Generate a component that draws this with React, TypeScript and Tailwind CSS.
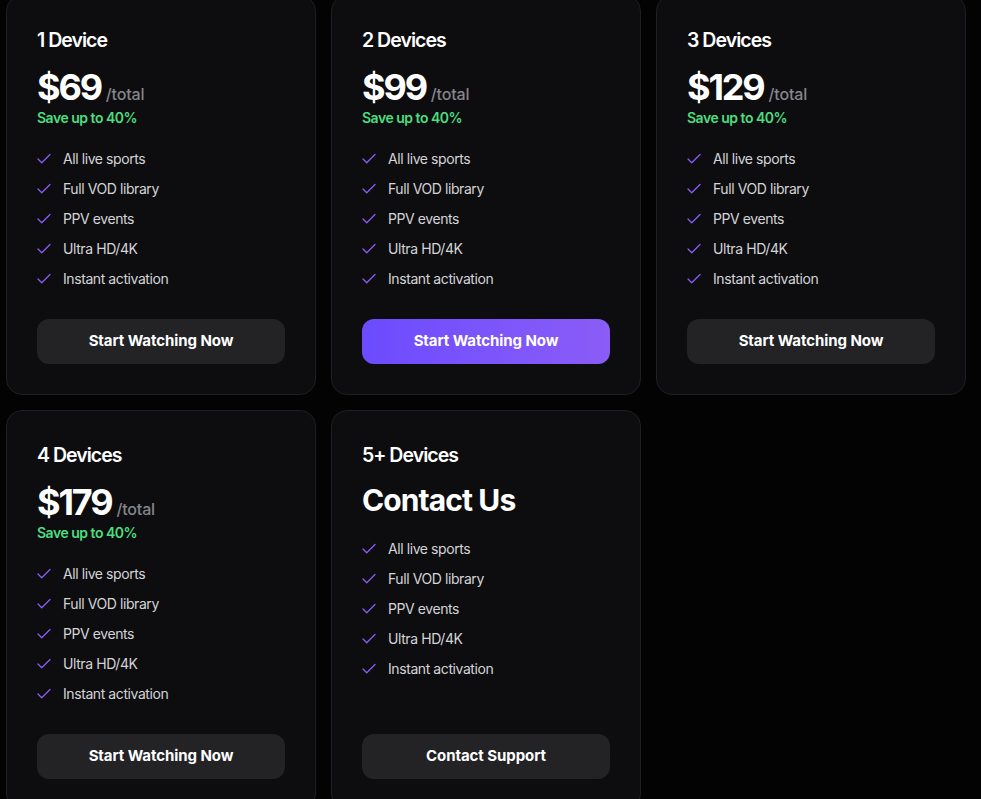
import React from "react";

const features = ["All live sports", "Full VOD library", "PPV events", "Ultra HD/4K", "Instant activation"];

function Check() {
  return (
    <svg width="18" height="18" viewBox="0 0 24 24" fill="none" stroke="#8b5cf6" strokeWidth="1.75" strokeLinecap="round" strokeLinejoin="round" className="-ml-[2px] shrink-0">
      <path d="M20 6 9 17l-5-5" />
    </svg>
  );
}

type Plan = { title: string; price?: string; contact?: boolean; popular?: boolean; button: string };

const plans: Plan[] = [
  { title: "1 Device", price: "$69", button: "Start Watching Now" },
  { title: "2 Devices", price: "$99", popular: true, button: "Start Watching Now" },
  { title: "3 Devices", price: "$129", button: "Start Watching Now" },
  { title: "4 Devices", price: "$179", button: "Start Watching Now" },
  { title: "5+ Devices", contact: true, button: "Contact Support" },
];

function Card({ p }: { p: Plan }) {
  return (
    <div className="flex h-full flex-col rounded-2xl border border-[#1f1f23] bg-[#0d0d0f] p-[30px]">
      <div className="text-[19.5px] font-semibold leading-[28px] tracking-[-0.05em] text-white">{p.title}</div>
      {p.contact ? (
        <div className="mt-[13px] mb-[21px] text-[30px] font-bold leading-[36px] tracking-[-0.03em] text-white">Contact Us</div>
      ) : (
        <>
          <div className="mt-3 flex items-baseline gap-[5px]">
            <span className="text-[36px] font-bold leading-[42px] tracking-[-0.06em] text-white">{p.price}</span>
            <span className="text-[16px] font-medium tracking-[-0.01em] text-[#85858c]">/total</span>
          </div>
          <div className="mb-[21px] text-[14px] font-semibold leading-[20px] tracking-[-0.035em] text-[#4ade80]">Save up to 40%</div>
        </>
      )}
      <ul className="flex flex-col gap-[10px]">
        {features.map((f) => (
          <li key={f} className="flex items-center gap-[10px] text-[14px] leading-[20px] tracking-[-0.03em] text-[#d4d4d8]">
            <Check />
            <span>{f}</span>
          </li>
        ))}
      </ul>
      <div className="min-h-[30px] flex-1" />
      <button
        className={
          "h-[45px] w-full rounded-xl text-[15px] font-bold tracking-[-0.005em] text-white " +
          (p.popular ? "bg-gradient-to-r from-[#6c4bff] to-[#8b5cf6]" : "bg-[#232326]")
        }
      >
        {p.button}
      </button>
    </div>
  );
}

export default function App() {
  return (
    <div className="min-h-[799px] bg-[#030303] font-['Inter',sans-serif]">
      <div className="ml-[6px] grid w-[960px] -translate-y-[5px] grid-cols-3 gap-[15px]">
        {plans.map((p) => (
          <Card key={p.title} p={p} />
        ))}
      </div>
    </div>
  );
}
